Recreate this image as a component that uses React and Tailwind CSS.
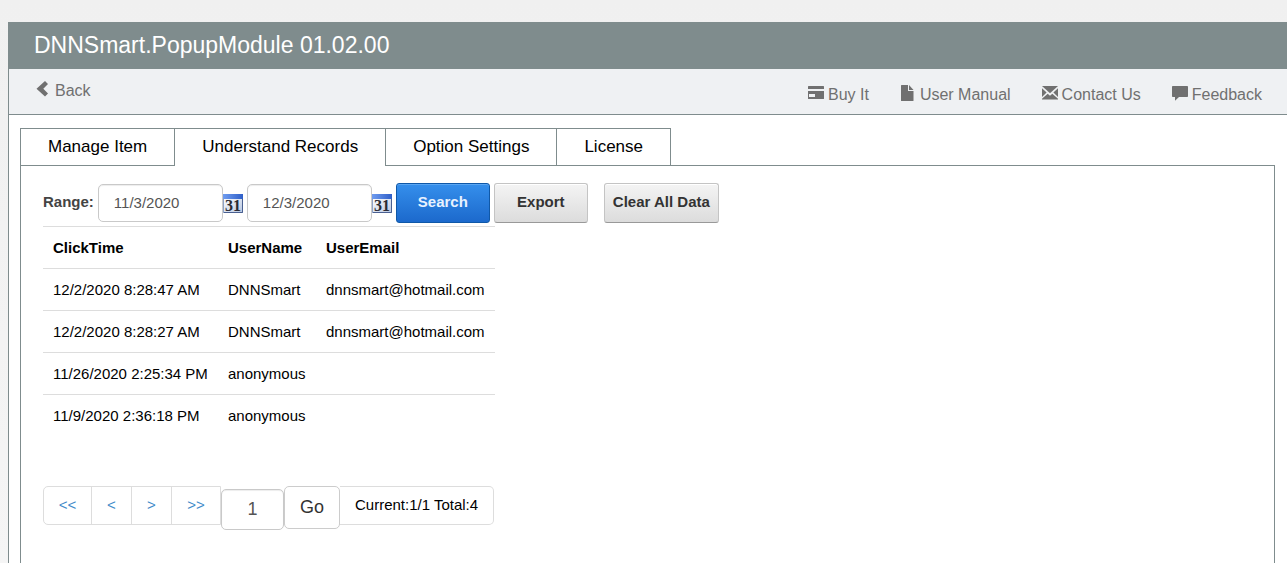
import React, { useState } from "react";

const tabs = ["Manage Item", "Understand Records", "Option Settings", "License"];

const records = [
  { time: "12/2/2020 8:28:47 AM", name: "DNNSmart", email: "dnnsmart@hotmail.com" },
  { time: "12/2/2020 8:28:27 AM", name: "DNNSmart", email: "dnnsmart@hotmail.com" },
  { time: "11/26/2020 2:25:34 PM", name: "anonymous", email: "" },
  { time: "11/9/2020 2:36:18 PM", name: "anonymous", email: "" },
];

function ChevronIcon() {
  return (
    <svg viewBox="0 0 16 16" className="size-4" fill="currentColor" aria-hidden="true">
      <path d="M10 0 13 3 8.300 7.800 13 12.500 10 15.500 1.500 7.800z" />
    </svg>
  );
}

function CardIcon() {
  return (
    <svg viewBox="0 0 16 16" className="size-4" fill="currentColor" aria-hidden="true">
      <path d="M.6 1h14.800a.6.600 0 0 1 .6.600V4H0V1.600A.6.600 0 0 1 .6 1z" />
      <path
        fillRule="evenodd"
        d="M0 6h16v7.400a.6.6 0 0 1-.6.6H.6a.6.6 0 0 1-.6-.6zM1 9v3h6V9z"
      />
    </svg>
  );
}

function FileIcon() {
  return (
    <svg viewBox="0 0 16 16" className="size-4" fill="currentColor" aria-hidden="true">
      <path d="M1.600 0H8v6h5.500v9.400a.6.6 0 0 1-.6.6H1.600a.6.6 0 0 1-.6-.6V.6a.6.6 0 0 1 .6-.6z" />
      <path d="M9 0l4.500 5H9z" />
    </svg>
  );
}

function MailIcon() {
  return (
    <svg viewBox="0 0 16 16" className="size-4" fill="currentColor" aria-hidden="true">
      <path d="M0 1h16L8 8.300z" />
      <path d="M0 3.300 4.600 7.600 0 12z" />
      <path d="M16 3.300 11.400 7.600 16 12z" />
      <path d="M0 14.500v-.8l5.700-5L8 10.800l2.300-2.100 5.700 5v.8z" />
    </svg>
  );
}

function CommentIcon() {
  return (
    <svg viewBox="0 0 16 16" className="size-4" fill="currentColor" aria-hidden="true">
      <path d="M.8 1h14.400a.8.800 0 0 1 .8.800v9.400a.8.800 0 0 1-.8.800H7l-4 3.800V12H.8a.8.800 0 0 1-.8-.8V1.800A.8.800 0 0 1 .8 1z" />
    </svg>
  );
}

function CalendarIcon() {
  return (
    <svg viewBox="0 0 20 19" className="h-[19px] w-5" aria-hidden="true">
      <defs>
        <linearGradient id="calTop" x1="0" y1="0" x2="1" y2="0">
          <stop offset="0" stopColor="#6f9cf0" />
          <stop offset="1" stopColor="#2f5fc8" />
        </linearGradient>
        <linearGradient id="calPage" x1="0" y1="0" x2="1" y2="1">
          <stop offset="0" stopColor="#ffffff" />
          <stop offset="1" stopColor="#b9c8e2" />
        </linearGradient>
      </defs>
      <rect width="20" height="19" fill="#8ea2c6" />
      <rect x="1" y="4" width="18" height="14" fill="url(#calPage)" />
      <path d="M19.500 5v13.500H1" fill="none" stroke="#4a6091" />
      <rect width="20" height="5" fill="url(#calTop)" />
      <text
        x="10"
        y="17"
        textAnchor="middle"
        fontFamily="'Liberation Serif', serif"
        fontWeight="bold"
        fontSize="16"
        fill="#2b2b33"
      >
        31
      </text>
    </svg>
  );
}

const links = [
  { label: "Buy It", icon: <CardIcon /> },
  { label: "User Manual", icon: <FileIcon /> },
  { label: "Contact Us", icon: <MailIcon /> },
  { label: "Feedback", icon: <CommentIcon /> },
];

function DateField({ id, label, value, onChange }) {
  return (
    <div className="flex items-center">
      <input
        id={id}
        aria-label={label}
        value={value}
        onChange={(e) => onChange(e.target.value)}
        className="h-[38px] w-[125px] rounded-[5px] border border-[#c9c9c9] bg-white px-[15px] pb-[2px] text-[#555] shadow-[inset_0_1px_1px_rgba(0,0,0,0.075)]"
      />
      <button type="button" aria-label={`Pick ${label}`} className="cursor-pointer">
        <CalendarIcon />
      </button>
    </div>
  );
}

function GrayButton({ children, className }) {
  return (
    <button
      type="button"
      className={`h-10 cursor-pointer rounded-[3px] border border-[#c4c4c4] border-b-[#999] bg-linear-to-b from-[#f4f4f4] to-[#dcdcdc] pb-[2px] font-bold text-[#333] shadow-[inset_0_1px_0_#fff] ${className}`}
    >
      {children}
    </button>
  );
}

export default function App() {
  const [active, setActive] = useState("Understand Records");
  const [from, setFrom] = useState("11/3/2020");
  const [to, setTo] = useState("12/3/2020");
  const [page, setPage] = useState("1");

  return (
    <div className="flex min-h-screen flex-col bg-linear-to-b from-[#f0f0f0] to-[#f5f5f5] pt-[22px] pl-2 font-['Liberation_Sans',Arial,sans-serif] text-[15px] leading-5 text-black">
      <div className="flex flex-1 flex-col border-l border-[#7f8c8d] bg-white">
        {/* Header */}
        <header className="bg-[#7f8c8d] px-[25px] pt-2 pb-[9px] text-white">
          <h1 className="text-[23px] leading-[30px]">DNNSmart.PopupModule 01.02.00</h1>
        </header>

        {/* Toolbar */}
        <div className="flex h-[46px] items-start justify-between border-b border-[#7f8c8d] bg-[#eff1f3] pr-[25px] pl-[26px] text-base leading-5 text-[#707070]">
          <a href="#" className="flex items-start gap-1 pt-3">
            <ChevronIcon />
            Back
          </a>
          <nav className="flex gap-[31px] pt-4">
            {links.map((l) => (
              <a key={l.label} href="#" className="flex items-start gap-1">
                {l.icon}
                {l.label}
              </a>
            ))}
          </nav>
        </div>

        <div className="flex flex-1 flex-col px-3 pt-[13px] pl-[11px]">
          {/* Tabs */}
          <div role="tablist" className="flex text-[17px]">
            {tabs.map((t) => (
              <button
                key={t}
                type="button"
                role="tab"
                aria-selected={active === t}
                onClick={() => setActive(t)}
                className={`h-[38px] cursor-pointer border-t border-l border-[#7f8c8d] px-[27px] ${
                  active === t ? "pb-px" : "border-b"
                }`}
              >
                {t}
              </button>
            ))}
            <div className="flex-1 border-b border-l border-[#7f8c8d]" />
          </div>

          {/* Records panel */}
          <div className="flex-1 border-x border-[#7f8c8d] px-[22px] pt-[17px] pb-8">
            <div className="flex items-center">
              <label htmlFor="from" className="mr-1 pb-[2px] font-bold text-[#444]">
                Range:
              </label>
              <div className="flex gap-1">
                <DateField id="from" label="start date" value={from} onChange={setFrom} />
                <DateField id="to" label="end date" value={to} onChange={setTo} />
                <button
                  type="button"
                  className="h-10 w-[94px] cursor-pointer rounded-[3px] border border-[#0f58a8] bg-linear-to-b from-[#358fec] to-[#1c69cc] pb-[2px] font-bold text-[#e8f2ff] shadow-[inset_0_1px_0_#5aa6f2]"
                >
                  Search
                </button>
                <GrayButton className="w-[94px]">Export</GrayButton>
                <GrayButton className="ml-3 w-[115px]">Clear All Data</GrayButton>
              </div>
            </div>

            <table className="mt-[3px] w-[452px] border-collapse text-left">
              <thead>
                <tr className="border-t border-[#ddd]">
                  <th className="h-[42px] w-[175px] px-[10px]">ClickTime</th>
                  <th className="w-[98px] px-[10px]">UserName</th>
                  <th className="px-[10px]">UserEmail</th>
                </tr>
              </thead>
              <tbody>
                {records.map((r) => (
                  <tr key={r.time} className="border-t border-[#ddd]">
                    <td className="h-[42px] px-[10px]">{r.time}</td>
                    <td className="px-[10px]">{r.name}</td>
                    <td className="px-[10px]">{r.email}</td>
                  </tr>
                ))}
              </tbody>
            </table>

            {/* Pager */}
            <div className="mt-[49px] flex items-start">
              <div className="flex h-[39px] divide-x divide-[#ddd] rounded-l-[5px] border border-[#ddd] text-[#428bca]">
                <a href="#" className="flex w-12 items-center justify-center">&lt;&lt;</a>
                <a href="#" className="flex w-10 items-center justify-center">&lt;</a>
                <a href="#" className="flex w-10 items-center justify-center">&gt;</a>
                <a href="#" className="flex w-12 items-center justify-center">&gt;&gt;</a>
              </div>
              <input
                aria-label="Page"
                value={page}
                onChange={(e) => setPage(e.target.value)}
                className="mt-[3px] h-[41px] w-[63px] rounded-[5px] border border-[#c9c9c9] text-center text-lg text-[#555] shadow-[inset_0_1px_1px_rgba(0,0,0,0.075)]"
              />
              <button
                type="button"
                className="h-[43px] w-14 cursor-pointer rounded-[5px] border border-[#ccc] text-lg text-[#333]"
              >
                Go
              </button>
              <span className="flex h-[39px] items-center rounded-r-[5px] border border-l-0 border-[#ddd] px-[15px]">
                Current:1/1 Total:4
              </span>
            </div>
          </div>
        </div>
      </div>
    </div>
  );
}
